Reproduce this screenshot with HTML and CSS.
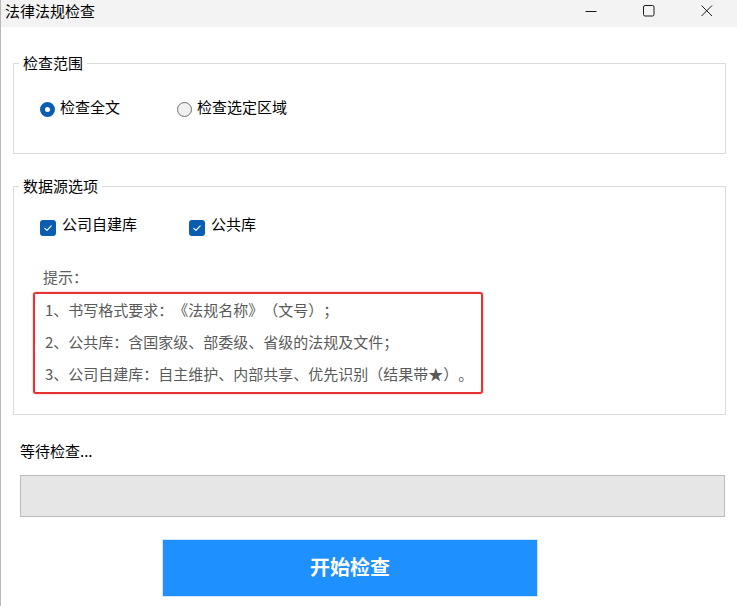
FILE: index.html
```html
<!DOCTYPE html>
<html lang="zh-CN">
<head>
<meta charset="utf-8">
<title>法律法规检查</title>
<link rel="stylesheet" href="styles.css">
</head>
<body>
<div class="window">
  <div class="titlebar">
    <span class="title">法律法规检查</span>
    <div class="controls">
      <span class="ctl"><svg width="12" height="12" viewBox="0 0 12 12"><line x1="0.5" y1="6.5" x2="11.5" y2="6.5" stroke="#1a1a1a" stroke-width="1"/></svg></span>
      <span class="ctl"><svg width="12" height="12" viewBox="0 0 12 12"><rect x="0.5" y="0.5" width="10.5" height="10.5" rx="1.5" fill="none" stroke="#1a1a1a" stroke-width="1"/></svg></span>
      <span class="ctl"><svg width="12" height="12" viewBox="0 0 12 12"><line x1="0.5" y1="0.5" x2="11" y2="11" stroke="#1a1a1a" stroke-width="1"/><line x1="11" y1="0.5" x2="0.5" y2="11" stroke="#1a1a1a" stroke-width="1"/></svg></span>
    </div>
  </div>
  <div class="content">
    <fieldset class="group">
      <legend>检查范围</legend>
      <div class="options options-scope">
        <label class="opt opt-radio-first"><span class="radio checked"></span><span>检查全文</span></label>
        <label class="opt"><span class="radio"></span><span>检查选定区域</span></label>
      </div>
    </fieldset>
    <fieldset class="group group-source">
      <legend>数据源选项</legend>
      <div class="options options-source">
        <label class="opt opt-check-first"><span class="check"><svg width="16" height="16" viewBox="0 0 16 16"><path d="M4.8 8.4 L7 10.4 L11.2 5.9" fill="none" stroke="#fff" stroke-width="1.1" stroke-linecap="round" stroke-linejoin="round"/></svg></span><span>公司自建库</span></label>
        <label class="opt"><span class="check"><svg width="16" height="16" viewBox="0 0 16 16"><path d="M4.8 8.4 L7 10.4 L11.2 5.9" fill="none" stroke="#fff" stroke-width="1.1" stroke-linecap="round" stroke-linejoin="round"/></svg></span><span>公共库</span></label>
      </div>
      <div class="hint-label">提示：</div>
      <div class="hint-box">
        <div class="hint-line">1、书写格式要求：《法规名称》（文号）；</div>
        <div class="hint-line">2、公共库：含国家级、部委级、省级的法规及文件；</div>
        <div class="hint-line">3、公司自建库：自主维护、内部共享、优先识别（结果带★）。</div>
      </div>
    </fieldset>
    <div class="status">等待检查...</div>
    <div class="progress"></div>
    <button class="start">开始检查</button>
  </div>
</div>
</body>
</html>
```
FILE: styles.css
```css
* { box-sizing: border-box; }
html, body { margin: 0; padding: 0; }
body {
  width: 737px;
  height: 606px;
  overflow: hidden;
  background: #fff;
  font-family: "Noto Sans CJK SC", "Microsoft YaHei", sans-serif;
  font-size: 15px;
  color: #000;
  text-spacing-trim: space-all;
}
.window {
  width: 737px;
  height: 606px;
  border-left: 1px solid #b9b9b9;
  display: flex;
  flex-direction: column;
}
.titlebar {
  height: 27px;
  flex: none;
  background: #f3f3f3;
  display: flex;
  align-items: flex-start;
}
.title {
  flex: 1;
  line-height: 22px;
  padding-left: 4px;
  color: #000;
}
.controls {
  display: flex;
  padding-right: 1px;
}
.ctl {
  width: 58px;
  height: 22px;
  display: flex;
  align-items: center;
  justify-content: center;
}
.ctl svg { display: block; }
.content {
  padding: 26px 11px 0 12px;
  display: flex;
  flex-direction: column;
}
.group {
  margin: 0;
  padding: 0;
  border: 1px solid #dcdcdc;
  min-width: 0;
}
.group legend {
  margin-left: 5px;
  padding: 0 4px;
  line-height: 20px;
}
.group-source { margin-top: 22px; }
.options {
  display: flex;
  align-items: flex-start;
  padding-left: 26px;
  line-height: 20px;
}
.options-scope { padding-top: 24px; padding-bottom: 36px; }
.options-source { padding-top: 18px; }
.opt {
  display: flex;
  align-items: flex-start;
}
.opt-radio-first { width: 137px; }
.opt-check-first { width: 149px; }
.radio {
  width: 15px;
  height: 15px;
  margin-top: 5px;
  margin-right: 5px;
  border-radius: 50%;
  border: 1px solid #6f6f6f;
  background: #efefef;
  flex: none;
}
.radio.checked {
  border: 5px solid #0b5db1;
  background: #fff;
}
.check {
  width: 16px;
  height: 16px;
  margin-top: 6px;
  margin-right: 6px;
  border-radius: 3px;
  background: #0b5db1;
  flex: none;
}
.check svg { display: block; }
.hint-label {
  margin: 31px 0 0 29px;
  line-height: 20px;
  color: #5e5e5e;
}
.hint-box {
  margin: 5px 0 20px 19px;
  width: 450px;
  height: 102px;
  border: 2px solid #e53333;
  border-radius: 3px;
  box-shadow: 0 0 1.5px rgba(229, 51, 51, 0.7);
  padding: 0 0 2px 10px;
  color: #5a5a5a;
}
.hint-line {
  line-height: 32px;
  white-space: nowrap;
}
.status {
  margin: 26px 0 0 7px;
  line-height: 20px;
}
.progress {
  margin: 14px 1px 0 7px;
  height: 42px;
  border: 1px solid #bcbcbc;
  background: #e6e6e6;
}
.start {
  margin: 22px 0 0 149px;
  width: 376px;
  height: 58px;
  border: 1px solid #cfe6ff;
  background: #1e90ff;
  color: #fff;
  font-family: "Noto Sans CJK SC", "Microsoft YaHei", sans-serif;
  font-size: 20px;
  font-weight: 700;
  padding: 0 0 4px 0;
}
```
